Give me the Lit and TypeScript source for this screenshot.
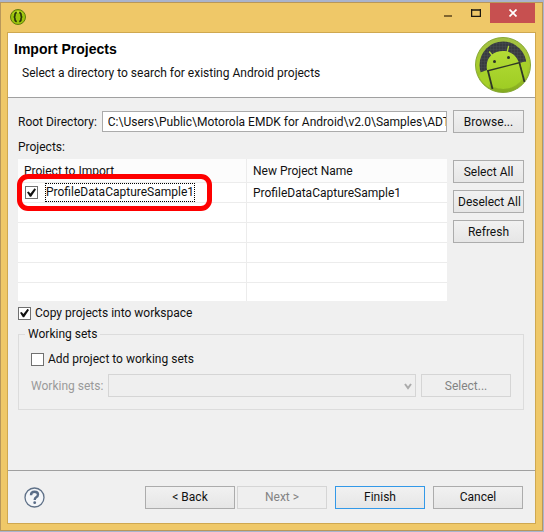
import { LitElement, html, svg, css } from "lit";
import { customElement, property, state } from "lit/decorators.js";

const controls = css`
  * {
    box-sizing: border-box;
  }
  button,
  input,
  select {
    font: inherit;
    color: inherit;
    margin: 0;
  }
  button {
    height: 23px;
    padding: 0 4px;
    border: 1px solid #acacac;
    border-radius: 0;
    background: linear-gradient(#f1f1f1, #e6e6e6);
    white-space: nowrap;
    line-height: 20px;
  }
  button:disabled {
    color: #838383;
    border-color: #d5d5d5;
    background: #efefef;
  }
  input[type="checkbox"] {
    appearance: none;
    flex: none;
    width: 13px;
    height: 13px;
    border: 1px solid #707070;
    background: #fff;
    display: grid;
    place-items: center;
  }
  input[type="checkbox"]:checked::before {
    content: "";
    width: 9px;
    height: 9px;
    background: #111;
    clip-path: polygon(0 46%, 18% 38%, 38% 62%, 84% 4%, 100% 16%, 46% 96%, 32% 96%);
  }
`;

const appIcon = svg`
  <svg class="app-icon" viewBox="0 0 16 16" aria-hidden="true">
    <circle cx="8" cy="8" r="7.5" fill="#9cc40c" stroke="#5f7a10" />
    <path d="M3 5 A6 6 0 0 1 13 5 Q8 2 3 5Z" fill="#cfe63c" />
    <path d="M6.8 3.6 Q4.8 3.6 5 6 Q5.1 7.8 3.8 8 Q5.1 8.2 5 10 Q4.8 12.4 6.8 12.4 M9.2 3.6 Q11.2 3.6 11 6 Q10.9 7.8 12.2 8 Q10.9 8.2 11 10 Q11.2 12.4 9.2 12.4" fill="none" stroke="#28330a" stroke-width="1.7" />
  </svg>`;

const androidLogo = svg`
  <svg class="logo" viewBox="0 0 56 56" aria-hidden="true">
    <defs>
      <linearGradient id="rim" x1="0" y1="0" x2="0" y2="1">
        <stop offset="0" stop-color="#a2bf45" />
        <stop offset="0.5" stop-color="#a9cd2c" />
        <stop offset="1" stop-color="#83ab1e" />
      </linearGradient>
      <linearGradient id="body" x1="0" y1="0" x2="0" y2="1">
        <stop offset="0" stop-color="#b4dc35" />
        <stop offset="1" stop-color="#9ccb22" />
      </linearGradient>
      <pattern id="mesh" width="3" height="3" patternUnits="userSpaceOnUse">
        <rect width="3" height="3" fill="#383b40" />
        <path d="M0 0H3M0 0V3" stroke="#4b4f55" stroke-width="0.8" />
      </pattern>
      <clipPath id="disc"><circle cx="28" cy="28" r="24" /></clipPath>
    </defs>
    <circle cx="28" cy="28" r="27.5" fill="url(#rim)" stroke="#86a735" />
    <circle cx="28" cy="28" r="23.5" fill="url(#mesh)" />
    <g clip-path="url(#disc)">
      <path d="M12 33 C10 21 18 14 28 14 C36 14 42 19 44 26 L54 24 V56 H4 V36 Z" fill="url(#body)" />
    </g>
    <path d="M14.500 15 L19 20.500 M33.500 9.500 L32 15.500" stroke="#b4dc35" stroke-width="1.300" stroke-linecap="round" />
    <path d="M12 34 L45 25.500" stroke="#2f3827" stroke-width="1.300" />
    <path d="M13 34 L17.500 52 M44.500 26 L49.500 45" stroke="#2f3827" stroke-width="1.800" />
    <path d="M4 39 Q6 34 10.500 36 L15 51 Q7 47 4 39Z M46 27 Q49 23 52 26 Q53.500 36 50.500 42Z" fill="#a6d029" />
    <circle cx="19.500" cy="24.500" r="1.500" fill="#2c332a" />
    <circle cx="33.500" cy="20.500" r="1.500" fill="#2c332a" />
  </svg>`;

@customElement("title-bar")
export class TitleBar extends LitElement {
  static styles = css`
    :host {
      display: flex;
      justify-content: space-between;
      height: 30px;
    }
    .app-icon {
      width: 16px;
      height: 16px;
      margin: 6px 2px;
    }
    .buttons {
      display: flex;
      height: 20px;
    }
    button {
      display: grid;
      place-items: center;
      width: 28px;
      padding: 0;
      border: 0;
      background: none;
    }
    .close {
      width: 45px;
      background: #c75050;
    }
  `;

  render() {
    return html`
      ${appIcon}
      <div class="buttons">
        <button aria-label="Minimize">
          <svg width="10" height="10"><path d="M1 8H9" stroke="#80652f" stroke-width="2" /></svg>
        </button>
        <button aria-label="Maximize">
          <svg width="10" height="8"><path d="M0 1H10M0.500 0V8M9.500 0V8M0 7.500H10" fill="none" stroke="#1c1810" stroke-width="1.500" /></svg>
        </button>
        <button class="close" aria-label="Close">
          <svg width="8" height="8"><path d="M0.500 0.500L7.500 7.500M7.500 0.500L0.500 7.500" stroke="#fff" stroke-width="1.700" /></svg>
        </button>
      </div>
    `;
  }
}

interface Project {
  source: string;
  name: string;
  selected: boolean;
}

@customElement("project-table")
export class ProjectTable extends LitElement {
  @property({ attribute: false }) projects: Project[] = [];
  @property({ type: Number }) rows = 6;

  static styles = [
    controls,
    css`
      :host {
        display: block;
        background: #fff;
      }
      table {
        width: 100%;
        table-layout: fixed;
        border-collapse: separate;
        border-spacing: 0;
      }
      .first {
        width: 229px;
      }
      th,
      td {
        height: 20px;
        padding: 0 6px;
        border-right: 1px solid #ececec;
        border-bottom: 1px solid #ececec;
        text-align: left;
        font-weight: 400;
        white-space: nowrap;
      }
      th {
        height: 24px;
        background: #fcfcfc;
      }
      th:last-child,
      td:last-child {
        border-right: 0;
      }
      tr:last-child td {
        height: 18px;
        border-bottom: 0;
      }
      .check {
        position: relative;
        display: flex;
        align-items: center;
        gap: 8px;
        width: max-content;
        margin-left: 1px;
      }
      .name {
        outline: 1px dotted #000;
        line-height: 17px;
      }
      .mark {
        position: absolute;
        inset: -10px -18px -10px -8px;
        border: 5px solid #fe0000;
        border-radius: 11px;
        pointer-events: none;
      }
    `,
  ];

  render() {
    const blank = Array.from({ length: Math.max(0, this.rows - this.projects.length) });
    return html`
      <table>
        <thead>
          <tr>
            <th class="first" scope="col">Project to Import</th>
            <th scope="col">New Project Name</th>
          </tr>
        </thead>
        <tbody>
          ${this.projects.map(
            (p) => html`<tr>
              <td>
                <label class="check">
                  <input type="checkbox" .checked=${p.selected} />
                  <span class="name">${p.source}</span>
                  <span class="mark"></span>
                </label>
              </td>
              <td>${p.name}</td>
            </tr>`
          )}
          ${blank.map(() => html`<tr><td></td><td></td></tr>`)}
        </tbody>
      </table>
    `;
  }
}

@customElement("app-root")
export class AppRoot extends LitElement {
  @state() private projects: Project[] = [
    { source: "ProfileDataCaptureSample1", name: "ProfileDataCaptureSample1", selected: true },
  ];

  private setAll(selected: boolean) {
    this.projects = this.projects.map((p) => ({ ...p, selected }));
  }

  static styles = [
    controls,
    css`
      :host {
        display: flex;
        min-height: 100vh;
        box-sizing: border-box;
        padding: 2px 1px 1px 0;
        background: #aab4cd;
        font: 12px/16px Roboto, "Noto Sans", sans-serif;
        color: #111;
      }
      .window {
        flex: 1;
        min-width: 0;
        display: flex;
        flex-direction: column;
        padding: 0 7px 7px;
        border: 1px solid #b8975a;
        background: #efc868;
      }
      .client {
        flex: 1;
        display: flex;
        flex-direction: column;
        outline: 1px solid #cfa850;
        background: #f0f0f0;
      }
      header {
        display: flex;
        justify-content: space-between;
        height: 65px;
        padding: 4px 4px 0 6px;
        border-bottom: 1px solid #a0a0a0;
        background: #fff;
      }
      h1 {
        margin: 4px 0 8px;
        font: 700 14px/16px "Liberation Sans", sans-serif;
        color: #000;
      }
      header p {
        margin: 0 8px;
      }
      .logo {
        width: 56px;
        height: 56px;
      }
      main {
        flex: 1;
        padding: 12px 11px 12px 10px;
      }
      .grid {
        display: grid;
        grid-template-columns: minmax(0, 1fr) 71px;
        column-gap: 6px;
      }
      .root {
        display: flex;
        align-items: center;
        gap: 5px;
      }
      .root input {
        flex: 1;
        min-width: 0;
        height: 21px;
        padding: 0 0 0 5px;
        border: 1px solid #ababab;
        background: #fff;
      }
      .caption {
        grid-column: 1 / -1;
        margin: 6px 0 4px;
      }
      .side {
        display: flex;
        flex-direction: column;
        gap: 7px;
        padding-top: 1px;
      }
      .option {
        display: flex;
        align-items: center;
        gap: 4px;
        width: max-content;
      }
      .copy {
        margin-top: 4px;
      }
      fieldset {
        min-width: 0;
        margin: 5px 0 0;
        padding: 9px 12px 12px;
        border: 1px solid #dcdcdc;
      }
      legend {
        margin-left: -6px;
        padding: 0 3px;
      }
      .sets {
        display: flex;
        align-items: center;
        gap: 5px;
        margin-top: 7px;
      }
      .sets label {
        color: #9a9a9a;
      }
      .combo {
        position: relative;
        flex: 1;
        display: flex;
      }
      select {
        appearance: none;
        width: 100%;
        height: 23px;
        border: 1px solid #d5d5d5;
        border-radius: 0;
        background: #efefef;
        opacity: 1;
      }
      .arrow {
        position: absolute;
        right: 4px;
        top: 9px;
      }
      .wide {
        width: 90px;
      }
      footer {
        display: flex;
        align-items: center;
        gap: 8px;
        height: 53px;
        padding: 0 12px 0 16px;
        border-top: 1px solid #a0a0a0;
      }
      .help {
        width: 21px;
        height: 21px;
        margin-right: auto;
        padding: 0;
        border: 0;
        background: none;
      }
      .pair {
        display: flex;
        gap: 2px;
      }
      .primary {
        border-color: #3399e8;
      }
    `,
  ];

  render() {
    return html`
      <div class="window">
        <title-bar></title-bar>
        <div class="client">
          <header>
            <div>
              <h1>Import Projects</h1>
              <p>Select a directory to search for existing Android projects</p>
            </div>
            ${androidLogo}
          </header>
          <main>
            <div class="grid">
              <div class="root">
                <label for="root">Root Directory:</label>
                <input id="root" type="text" value="C:\\Users\\Public\\Motorola EMDK for Android\\v2.0\\Samples\\ADT" />
              </div>
              <button>Browse...</button>
              <div class="caption">Projects:</div>
              <project-table .projects=${this.projects}></project-table>
              <div class="side">
                <button @click=${() => this.setAll(true)}>Select All</button>
                <button @click=${() => this.setAll(false)}>Deselect All</button>
                <button>Refresh</button>
              </div>
            </div>
            <label class="option copy"><input type="checkbox" checked />Copy projects into workspace</label>
            <fieldset>
              <legend>Working sets</legend>
              <label class="option"><input type="checkbox" />Add project to working sets</label>
              <div class="sets">
                <label for="sets">Working sets:</label>
                <div class="combo">
                  <select id="sets" disabled></select>
                  <svg class="arrow" width="8" height="7" aria-hidden="true">
                    <path d="M1 1L4 5L7 1" fill="none" stroke="#ababab" stroke-width="2" />
                  </svg>
                </div>
                <button class="wide" disabled>Select...</button>
              </div>
            </fieldset>
          </main>
          <footer>
            <button class="help" aria-label="Help">
              <svg width="21" height="21" viewBox="0 0 21 21">
                <circle cx="10.500" cy="10.500" r="9.500" fill="#f4f6f9" stroke="#5f7188" stroke-width="1.300" />
                <path d="M7 8.200 Q7 4.800 10.500 4.800 Q14 4.800 14 7.600 Q14 9.200 12.200 10.300 Q10.700 11.200 10.700 13" fill="none" stroke="#5a6d88" stroke-width="2.400" />
                <circle cx="10.700" cy="15.700" r="1.400" fill="#5a6d88" />
              </svg>
            </button>
            <div class="pair">
              <button class="wide">&lt; Back</button>
              <button class="wide" disabled>Next &gt;</button>
            </div>
            <button class="wide primary">Finish</button>
            <button class="wide">Cancel</button>
          </footer>
        </div>
      </div>
    `;
  }
}
